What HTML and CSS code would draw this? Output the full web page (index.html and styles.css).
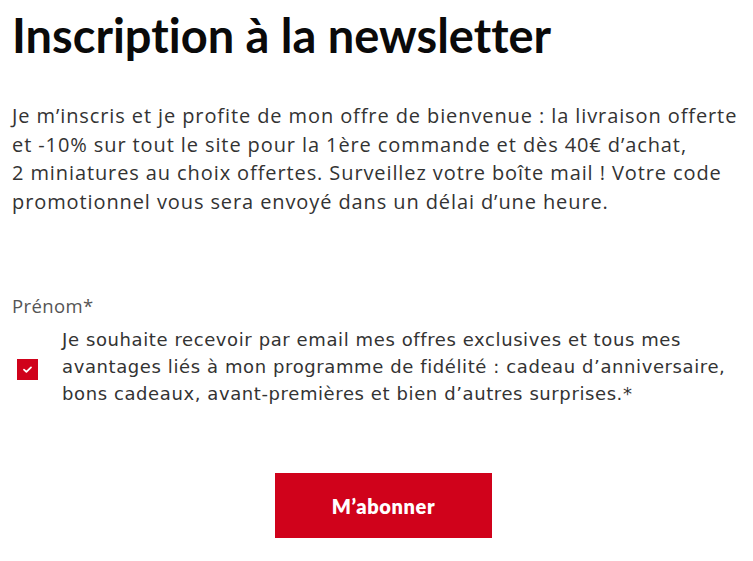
FILE: index.html
```html
<!DOCTYPE html>
<html lang="fr">
<head>
<meta charset="utf-8">
<title>Inscription à la newsletter</title>
<link rel="stylesheet" href="styles.css">
</head>
<body>
<main class="page">
  <h1 class="title">Inscription à la newsletter</h1>
  <p class="intro">Je m’inscris et je profite de mon offre de bienvenue : la livraison offerte et -10% sur tout le site pour la 1ère commande et dès 40€ d’achat,<br>2&nbsp;miniatures au choix offertes. Surveillez votre boîte mail ! Votre code promotionnel vous sera envoyé dans un délai d’une heure.</p>
  <form class="form">
    <label class="field-label">Prénom*</label>
    <label class="consent">
      <span class="box">
        <svg viewBox="0 0 21 21" width="21" height="21" aria-hidden="true"><path d="M7 10.6 L9.4 12.9 L14 8.4" fill="none" stroke="#fff" stroke-width="1.8" stroke-linecap="round" stroke-linejoin="round"/></svg>
      </span>
      <span class="consent-text">Je souhaite recevoir par email mes offres exclusives et tous mes avantages liés à mon programme de fidélité : cadeau d’anniversaire, bons cadeaux, avant-premières et bien d’autres surprises.*</span>
    </label>
    <div class="actions">
      <button type="button" class="btn">M’abonner</button>
    </div>
  </form>
</main>
</body>
</html>
```
FILE: styles.css
```css
* { box-sizing: border-box; }
html, body { margin: 0; padding: 0; background: #fff; }
body { font-family: "Open Sans", "Liberation Sans", sans-serif; color: #333; }
.page { padding: 0 4px 0 12px; }
.title {
  margin: 0;
  padding-top: 9px;
  font-family: "Lato", "Open Sans", sans-serif;
  font-weight: 700;
  font-size: 47px;
  line-height: 52px;
  color: #0a0a0a;
  font-variant-ligatures: none;
}
.intro {
  margin: 41px 0 0;
  font-size: 20px;
  line-height: 28.5px;
  letter-spacing: 0.9px;
  color: #333;
  font-weight: 400;
}
.form { margin-top: 78px; }
.field-label { display: block; font-size: 18.5px; letter-spacing: 0.4px; color: #555; line-height: 24px; }
.consent { display: flex; align-items: center; gap: 24px; margin-top: 8px; }
.box { flex: none; width: 21px; height: 21px; background: #d0021b; margin: 6px 0 0 5px; display: flex; }
.consent-text {
  font-family: "DejaVu Sans", "Open Sans", sans-serif;
  font-size: 18px; line-height: 27px; letter-spacing: 0.6px; color: #333;
}
.actions { display: flex; justify-content: center; margin-top: 66px; padding-left: 6px; }
.btn {
  width: 217px; height: 65px;
  background: #d0021b; color: #fff; border: 0;
  font-family: "Lato", "Open Sans", sans-serif; font-weight: 800; font-size: 20px; letter-spacing: 0.6px;
}
```
